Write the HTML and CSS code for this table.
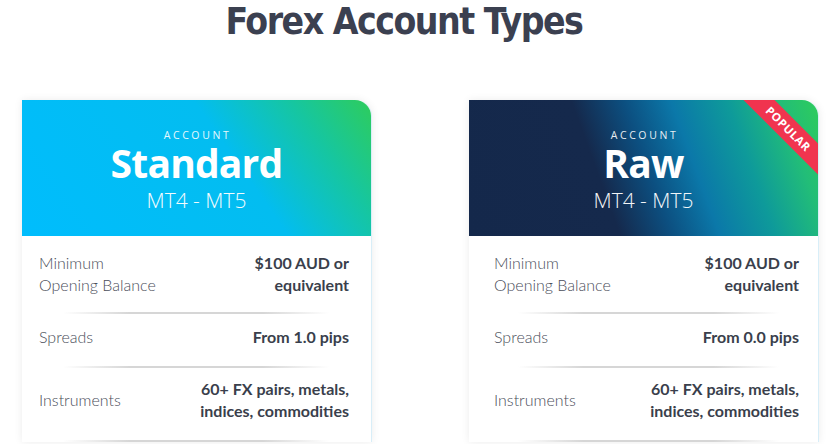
FILE: index.html
```html
<!DOCTYPE html>
<html>
<head>
<meta charset="utf-8">
<link rel="stylesheet" href="styles.css">
</head>
<body>
<main class="page">
  <h1 class="title">Forex Account Types</h1>
  <div class="cards">
    <section class="card">
      <header class="card-head head-standard">
        <div class="eyebrow">ACCOUNT</div>
        <div class="name">Standard</div>
        <div class="platform">MT4 - MT5</div>
      </header>
      <div class="rows">
        <div class="row row-first"><div class="label">Minimum<br>Opening Balance</div><div class="value">$100 AUD or<br>equivalent</div></div>
        <div class="sep"></div>
        <div class="row row-single"><div class="label">Spreads</div><div class="value">From 1.0 pips</div></div>
        <div class="sep"></div>
        <div class="row row-last"><div class="label">Instruments</div><div class="value">60+ FX pairs, metals,<br>indices, commodities</div></div>
        <div class="sep"></div>
      </div>
    </section>
    <section class="card">
      <header class="card-head head-raw">
        <div class="ribbon">POPULAR</div>
        <div class="eyebrow">ACCOUNT</div>
        <div class="name">Raw</div>
        <div class="platform">MT4 - MT5</div>
      </header>
      <div class="rows rows-wide">
        <div class="row row-first"><div class="label">Minimum<br>Opening Balance</div><div class="value">$100 AUD or<br>equivalent</div></div>
        <div class="sep"></div>
        <div class="row row-single"><div class="label">Spreads</div><div class="value">From 0.0 pips</div></div>
        <div class="sep"></div>
        <div class="row row-last"><div class="label">Instruments</div><div class="value">60+ FX pairs, metals,<br>indices, commodities</div></div>
        <div class="sep"></div>
      </div>
    </section>
  </div>
</main>
</body>
</html>
```

FILE: styles.css
```css
html, body {
  margin: 0;
  padding: 0;
  background: #ffffff;
}
body {
  width: 836px;
  height: 444px;
  overflow: hidden;
  font-family: "Lato", "Open Sans", sans-serif;
}
.page {
  display: flex;
  flex-direction: column;
  align-items: center;
}
.title {
  margin: 0;
  height: 100px;
  line-height: 44px;
  font-family: "DejaVu Sans Condensed", "DejaVu Sans", sans-serif;
  font-weight: 700;
  font-size: 37px;
  color: #3b4050;
  margin-left: -28px;
  letter-spacing: -1.5px;
}
.cards {
  display: flex;
  gap: 97px;
  margin-left: 22px;
  align-self: flex-start;
}
.card {
  flex: 0 0 auto;
  width: 349px;
  background: #fff;
  box-shadow: 0 0 8px rgba(0, 0, 0, 0.08);
  border-top-right-radius: 16px;
  border-right: 1px solid #d8eef8;
}
.card-head {
  position: relative;
  height: 136px;
  border-top-right-radius: 16px;
  overflow: hidden;
  color: #fff;
  display: flex;
  flex-direction: column;
  align-items: center;
  box-sizing: border-box;
  padding-top: 28px;
}
.head-standard {
  background: linear-gradient(235deg, #2ecc5c 0%, #16c6a0 18%, #03bdf0 40%, #00bdfd 100%);
}
.head-raw {
  background: linear-gradient(70deg, #14284b 0%, #15294c 38%, #0c4f80 51%, #0b78a9 63%, #0e9a9a 77%, #22bd78 90%, #2ecc5c 100%);
}
.eyebrow {
  font-family: "Open Sans", sans-serif;
  font-size: 10.5px;
  letter-spacing: 2.6px;
  line-height: 14px;
  height: 14px;
  opacity: 0.9;
  padding-left: 2px;
}
.name {
  font-family: "Open Sans", sans-serif;
  font-weight: 700;
  font-size: 39px;
  line-height: 40px;
  height: 40px;
  margin-top: 1px;
  letter-spacing: -0.8px;
}
.platform {
  font-family: "Open Sans", sans-serif;
  font-weight: 300;
  font-size: 21px;
  line-height: 24px;
  margin-top: 5px;
  opacity: 0.95;
}
.ribbon {
  position: absolute;
  top: 18px;
  right: -31px;
  width: 122px;
  height: 22px;
  line-height: 22px;
  background: #f0344f;
  color: #fff;
  font-family: "Open Sans", sans-serif;
  font-weight: 700;
  font-size: 11.5px;
  letter-spacing: 0.5px;
  text-align: center;
  transform: rotate(45deg);
}
.rows {
  display: flex;
  flex-direction: column;
  padding: 0 22px 0 17px;
}
.rows-wide {
  padding: 0 19px 0 25px;
}
.row {
  display: flex;
  justify-content: space-between;
  align-items: center;
}
.row-first {
  padding: 16px 0 16px;
}
.row-single {
  padding: 12px 0 18px;
}
.row-last {
  padding: 10px 0 18px;
}
.label {
  font-weight: 300;
  font-size: 16px;
  line-height: 22px;
  color: #4a4e5a;
}
.value {
  font-weight: 700;
  font-size: 16px;
  line-height: 22px;
  color: #3a3f4c;
  text-align: right;
}
.sep {
  height: 2px;
  margin: 0 20px 0 24px;
  background: linear-gradient(90deg, rgba(200,200,200,0) 0%, #d6d6d6 25%, #d6d6d6 75%, rgba(200,200,200,0) 100%);
}
```
